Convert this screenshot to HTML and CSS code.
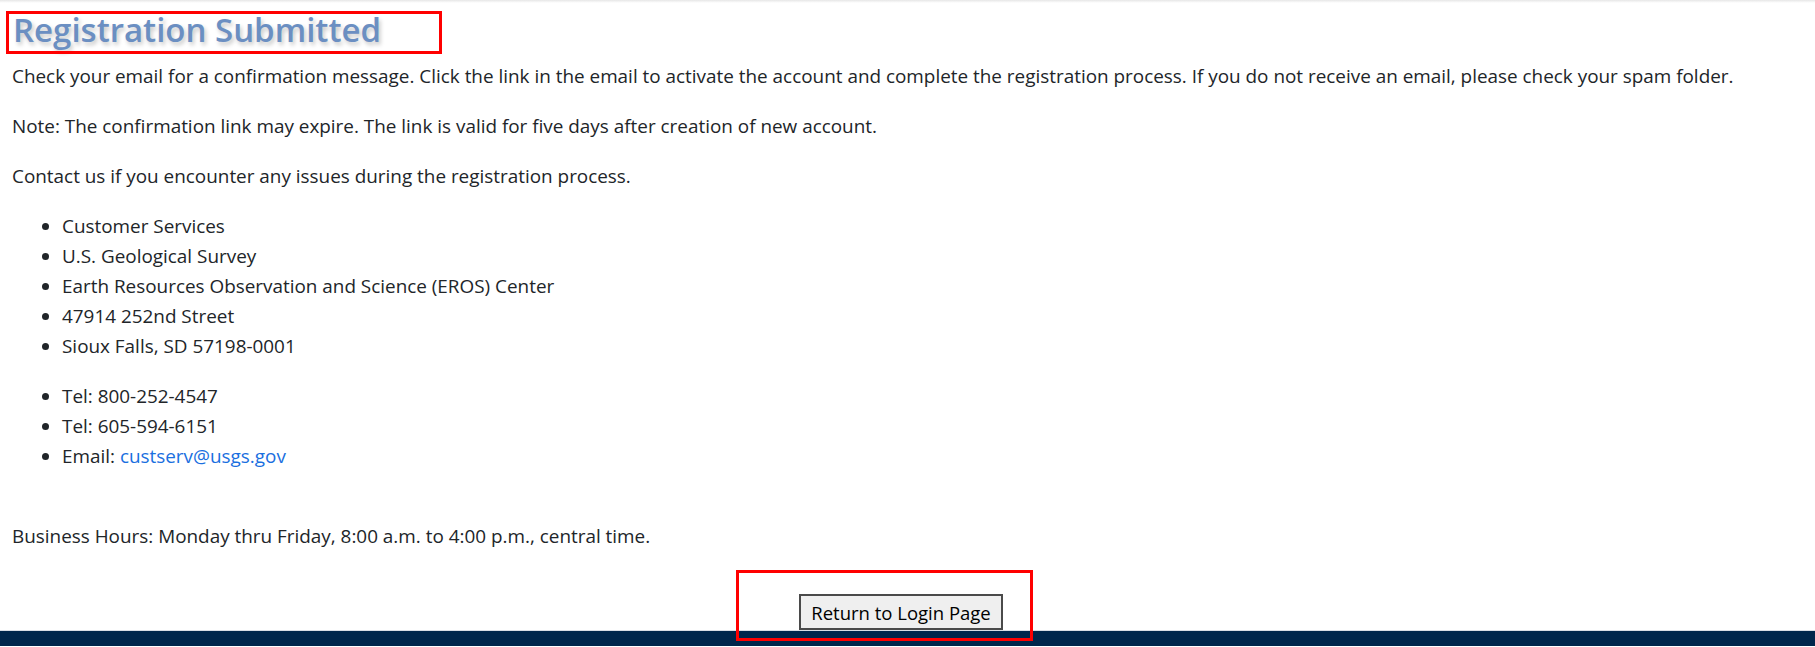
FILE: index.html
```html
<!DOCTYPE html>
<html lang="en">
<head>
<meta charset="utf-8">
<title>Registration Submitted</title>
<link rel="stylesheet" href="styles.css">
</head>
<body>
<div class="topshade"></div>
<main class="content">
  <div class="title-wrap">
    <h3 class="title">Registration Submitted</h3>
    <span class="mark mark-title"></span>
  </div>
  <p>Check your email for a confirmation message. Click the link in the email to activate the account and complete the registration process. If you do not receive an email, please check your spam folder.</p>
  <p>Note: The confirmation link may expire. The link is valid for five days after creation of new account.</p>
  <p>Contact us if you encounter any issues during the registration process.</p>
  <ul>
    <li>Customer Services</li>
    <li>U.S. Geological Survey</li>
    <li>Earth Resources Observation and Science (EROS) Center</li>
    <li>47914 252nd Street</li>
    <li>Sioux Falls, SD 57198-0001</li>
  </ul>
  <ul class="contact">
    <li>Tel: 800-252-4547</li>
    <li>Tel: 605-594-6151</li>
    <li>Email: <a href="#">custserv@usgs.gov</a></li>
  </ul>
  <p class="hours">Business Hours: Monday thru Friday, 8:00 a.m. to 4:00 p.m., central time.</p>
  <div class="actions">
    <button class="btn" type="button">Return to Login Page</button>
    <span class="mark mark-btn"></span>
  </div>
</main>
<footer class="footer"></footer>
</body>
</html>
```

FILE: styles.css
```css
html, body {
  margin: 0;
  padding: 0;
  background: #ffffff;
}
body {
  font-family: "Open Sans", "Noto Sans", sans-serif;
  font-size: 18.9px;
  line-height: 30px;
  color: #212529;
}
.topshade {
  height: 3px;
  background: linear-gradient(#e6e6e6, #f6f6f6 60%, #ffffff);
}
.content {
  position: relative;
  padding: 6px 12px 0 12px;
}
.title-wrap {
  position: relative;
}
.title {
  margin: 0 0 10px 0;
  font-size: 33px;
  line-height: 42px;
  font-weight: 600;
  color: #6b8fc2;
  text-shadow: 2px 3px 4px rgba(0, 0, 0, 0.22);
  padding-left: 1px;
}
p {
  margin: 0 0 20px 0;
}
ul {
  margin: 0 0 20px 0;
  padding-left: 50px;
}
ul.contact {
  margin-bottom: 50px;
}
a {
  color: #1a6fe0;
  text-decoration: none;
}
.hours {
  margin-bottom: 43px;
}
.actions {
  position: relative;
  display: flex;
  justify-content: center;
}
.btn {
  margin-right: 13px;
  width: 204px;
  height: 36px;
  padding: 0;
  font-family: inherit;
  font-size: 18.5px;
  color: #000;
  background: #efefef;
  border: 2px solid #4a4a4a;
  border-radius: 0;
}
.mark {
  position: absolute;
  border: 3px solid #ff0000;
  box-sizing: border-box;
  pointer-events: none;
}
.mark-title {
  left: -6px;
  top: 2px;
  width: 436px;
  height: 43px;
}
.mark-btn {
  left: 724px;
  top: -24px;
  width: 297px;
  height: 71px;
  z-index: 2;
}
.footer {
  height: 15px;
  border-top: 1px solid #d9dde3;
  background: #00264b;
}
```
